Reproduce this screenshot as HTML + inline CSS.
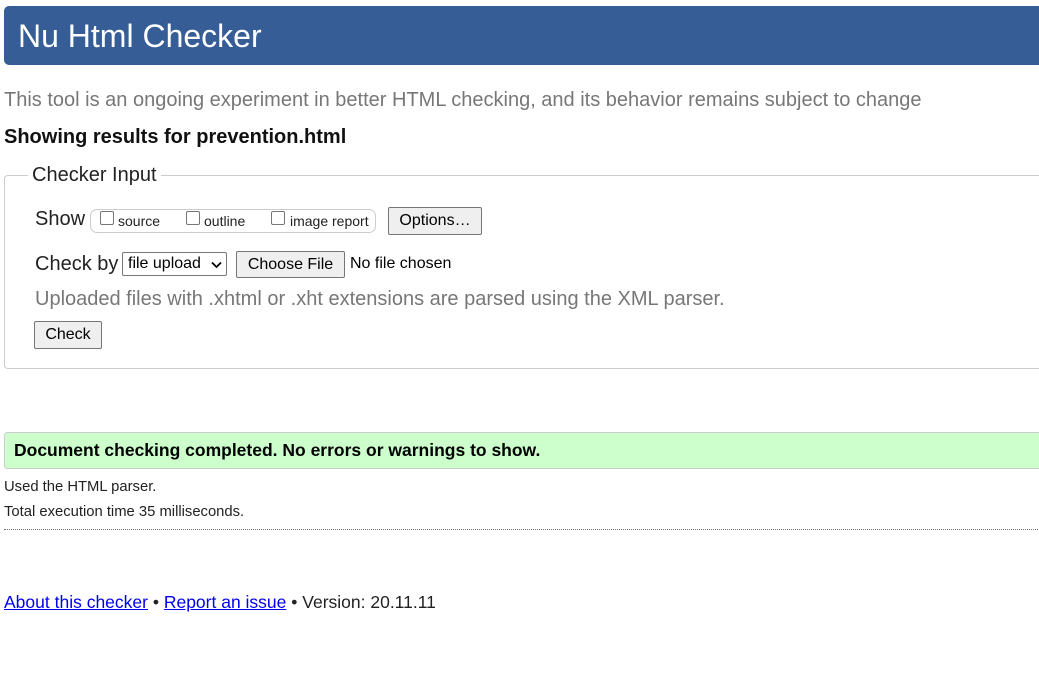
<!DOCTYPE html>
<html><head><meta charset="utf-8"><style>
*{margin:0;padding:0;box-sizing:border-box}
body{width:1039px;height:682px;background:#fff;font-family:"Liberation Sans",Arial,sans-serif;color:#222;position:relative;overflow:hidden}
.a{position:absolute;white-space:nowrap}
.hdr{left:4px;top:6px;width:1040px;height:59px;background:#365d95;border-radius:5px 0 0 5px}
.hdr span{position:absolute;left:14px;top:12px;font-size:32px;color:#fff}
.btn{position:absolute;background:#efefef;border:1px solid #767676;border-radius:2px;font-size:16px;color:#000;text-align:center}
.cb{position:absolute;width:14px;height:14px;border:1px solid #767676;border-radius:2px;background:#fff}
</style></head><body>
<div class="a hdr"><span>Nu Html Checker</span></div>
<div class="a" style="left:4px;top:89px;font-size:20px;color:#777">This tool is an ongoing experiment in better HTML checking, and its behavior remains subject to change</div>
<div class="a" style="left:4px;top:126px;font-size:20px;font-weight:bold;color:#111">Showing results for prevention.html</div>
<div class="a" style="left:4px;top:175px;width:1040px;height:194px;border:1px solid #ccc;border-right:none;border-radius:4px 0 0 4px"></div>
<div class="a" style="left:28px;top:164px;padding:0 4px;background:#fff;font-size:20px;color:#222">Checker Input</div>
<div class="a" style="left:35px;top:208px;font-size:20px">Show</div>
<div class="a" style="left:90px;top:209px;width:286px;height:24px;border:1px solid #ccc;border-radius:7px"></div>
<div class="cb" style="left:100px;top:211px"></div>
<div class="a" style="left:118px;top:213px;font-size:14px">source</div>
<div class="cb" style="left:186px;top:211px"></div>
<div class="a" style="left:204px;top:213px;font-size:14px">outline</div>
<div class="cb" style="left:271px;top:211px"></div>
<div class="a" style="left:290px;top:213px;font-size:14px">image report</div>
<div class="btn" style="left:388px;top:207px;width:94px;height:28px;line-height:26px">Options…</div>
<div class="a" style="left:35px;top:253px;font-size:20px">Check by</div>
<div class="a" style="left:122px;top:252px;width:105px;height:24px;border:1px solid #767676;border-radius:2px;font-size:16px;color:#000;padding-left:5px;line-height:22px">file upload
<svg style="position:absolute;right:4px;top:8px" width="11" height="8" viewBox="0 0 11 8"><path d="M1 1.5l4.5 4.5 4.5-4.5" stroke="#000" stroke-width="1.8" fill="none"/></svg></div>
<div class="btn" style="left:236px;top:251px;width:109px;height:27px;line-height:25px">Choose File</div>
<div class="a" style="left:350px;top:255px;font-size:16px;color:#000">No file chosen</div>
<div class="a" style="left:35px;top:288px;font-size:20px;color:#777">Uploaded files with .xhtml or .xht extensions are parsed using the XML parser.</div>
<div class="btn" style="left:34px;top:321px;width:68px;height:28px;line-height:26px">Check</div>
<div class="a" style="left:4px;top:432px;width:1040px;height:37px;background:#ccffcc;border:1px solid #ccc;border-right:none;border-radius:3px 0 0 3px"></div>
<div class="a" style="left:14px;top:440px;font-size:17.5px;font-weight:bold;color:#000">Document checking completed. No errors or warnings to show.</div>
<div class="a" style="left:4px;top:479px;font-size:14.8px">Used the HTML parser.</div>
<div class="a" style="left:4px;top:504px;font-size:14.8px">Total execution time 35 milliseconds.</div>
<div class="a" style="left:4px;top:529px;width:1040px;border-top:1px dotted #777"></div>
<div class="a" style="left:4px;top:592px;font-size:17.5px;color:#222"><span style="color:#00e;text-decoration:underline">About this checker</span> • <span style="color:#00e;text-decoration:underline">Report an issue</span> • Version: 20.11.11</div>
</body></html>
